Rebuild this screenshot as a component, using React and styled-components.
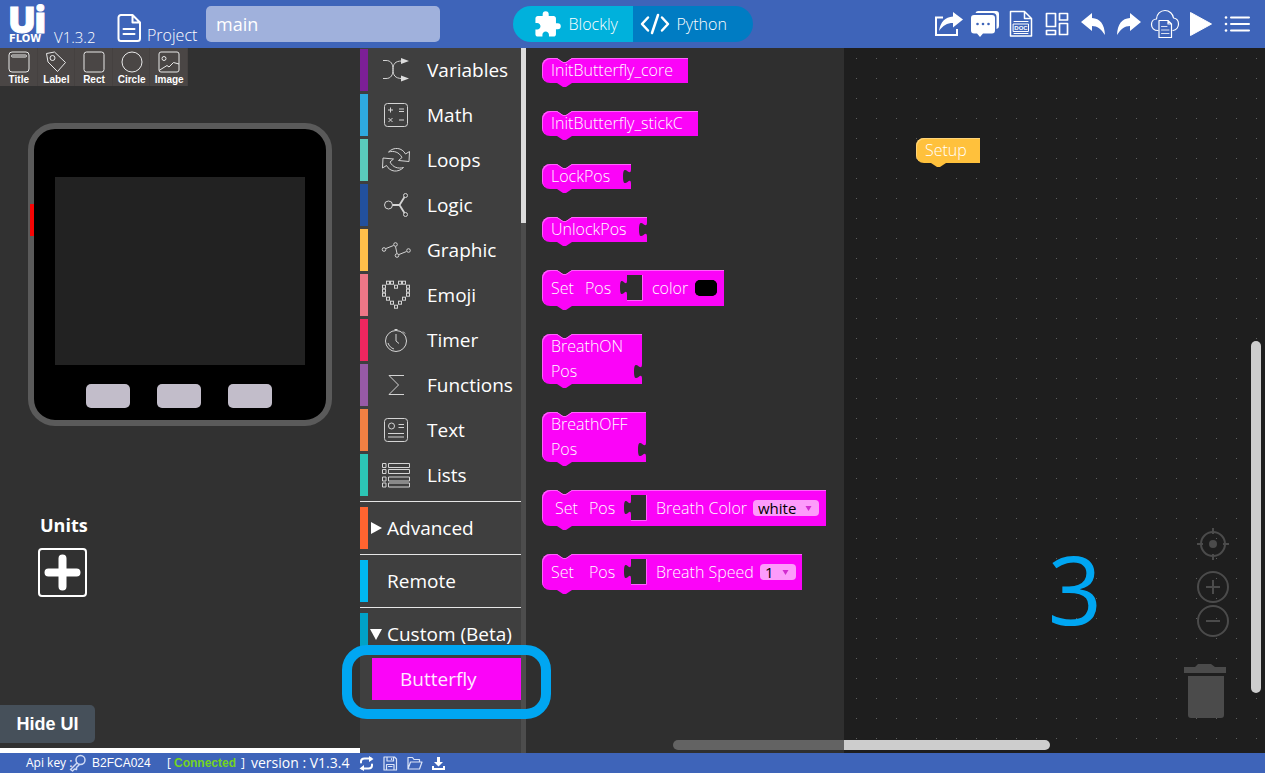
import React from 'react';
import styled, { createGlobalStyle } from 'styled-components';
import { MdExtension } from 'react-icons/md';

const c = {
  blue: '#3e64b9',
  left: '#313131',
  menu: '#3f3f3f',
  flyout: '#2f2f2f',
  canvas: '#1e1e1e',
  dot: '#5e5e5e',
  pink: '#fb04f8',
  pinkLight: '#ff62fc',
  ring: '#00a6f2',
  control: '#4b4b4b',
  thumb: '#cdcdcd',
};

const sans = '"Liberation Sans", Arial, sans-serif';
const ui = '"Open Sans", "Noto Sans", sans-serif';

const GlobalStyle = createGlobalStyle`
  *, *::before, *::after { box-sizing: border-box; }
  body { margin: 0; background: ${c.left}; color: #fff; font-family: ${ui}; }
  button { border: 0; padding: 0; margin: 0; background: none; color: inherit; font: inherit; cursor: pointer; }
  svg { display: block; flex: none; }
`;

const Page = styled.div`
  display: grid;
  grid-template-rows: 48px 1fr 20px;
  min-height: 100vh;
`;

/* ---------- header ---------- */
const Header = styled.header`
  display: grid;
  grid-template-columns: 1fr auto 1fr;
  align-items: center;
  background: ${c.blue};
`;
const HeaderLeft = styled.div`
  display: flex;
  align-items: flex-end;
  height: 36px;
  padding-left: 9px;
`;
const Logo = styled.svg`
  width: 36px;
  height: 36px;
  margin-right: 9px;
  overflow: visible;
  fill: #fff;
`;
const Version = styled.span`
  width: 63px;
  font: 300 15px/10px ${ui};
`;
const ProjectLabel = styled.label`
  display: flex;
  align-items: flex-end;
  gap: 6px;
  width: 89px;
  font: 300 16px/14px ${ui};
`;
const ProjectInput = styled.input`
  width: 234px;
  height: 36px;
  border: 0;
  border-radius: 5px;
  padding: 0 10px;
  background: #a0b1dc;
  color: #fff;
  font: 400 18px/28px ${ui};
  outline: 0;
`;
const ModeSwitch = styled.div`
  display: flex;
  height: 36px;
  border-radius: 18px;
  overflow: hidden;
`;
const Mode = styled.button`
  display: flex;
  align-items: center;
  gap: 7px;
  width: 120px;
  padding-left: ${(p) => (p.$active ? 20 : 7)}px;
  background: ${(p) => (p.$active ? '#00b1dc' : '#007cc3')};
  font: 300 16px/20px ${ui};
`;
const Actions = styled.div`
  display: flex;
  justify-content: flex-end;
  padding-right: 10px;
`;
const Action = styled.button`
  width: 36px;
  height: 36px;
`;

/* ---------- main ---------- */
const Main = styled.main`
  display: grid;
  grid-template-columns: 360px 166px 318px 1fr;
`;
const Designer = styled.section`
  display: flex;
  flex-direction: column;
  background: ${c.left};
  border-bottom: 5px solid #fff;
`;
const Tools = styled.div`
  display: flex;
  width: 188px;
  height: 38px;
  background: #4a4645;
`;
const Tool = styled.button`
  flex: 1;
  display: flex;
  flex-direction: column;
  align-items: center;
  gap: 1px;
  padding: 3px 0 0 1px;
  border-right: 1px solid #454140;
  font: 700 10px/11px ${sans};
`;
const Device = styled.div`
  position: relative;
  width: 304px;
  height: 303px;
  margin: 37px 0 0 28px;
  padding: 48px 21px 0;
  border: 6px solid #5a5a5a;
  border-radius: 27px;
  background: #000;
`;
const PowerMark = styled.i`
  position: absolute;
  left: -4px;
  top: 75px;
  width: 4px;
  height: 32px;
  background: #f50505;
`;
const Screen = styled.div`
  height: 188px;
  background: #222;
`;
const Keys = styled.div`
  display: flex;
  gap: 27px;
  margin: 19px 0 0 31px;
`;
const Key = styled.button`
  width: 44px;
  height: 24px;
  border-radius: 5px;
  background: #c2bdca;
`;
const UnitsTitle = styled.h2`
  margin: 87px 0 0 40px;
  font: 700 18px/24px ${ui};
`;
const AddUnit = styled.button`
  width: 49px;
  height: 49px;
  margin: 11px 0 0 38px;
  border: 2px solid #fff;
  border-radius: 4px;
`;
const HideUi = styled.button`
  align-self: flex-start;
  width: 95px;
  height: 38px;
  margin: auto 0 5px;
  border-radius: 0 5px 5px 0;
  background: #46505a;
  font: 700 18px/24px ${sans};
`;

/* ---------- category menu ---------- */
const Menu = styled.nav`
  display: grid;
  grid-template-columns: 1fr 5px;
  background: ${c.menu};
`;
const Categories = styled.div`
  display: flex;
  flex-direction: column;
  padding-top: 1px;
`;
const Category = styled.button`
  position: relative;
  display: flex;
  align-items: center;
  height: 42px;
  margin-bottom: 3px;
  border-left: 8px solid ${(p) => p.$color};
  padding-left: ${(p) => p.$indent || 14}px;
  gap: ${(p) => p.$gap || 17}px;
  white-space: nowrap;
  text-align: left;
  font: 400 19px/28px ${ui};
`;
const Rule = styled.hr`
  width: 100%;
  height: 1px;
  margin: 2px 0 5px;
  border: 0;
  background: #e6e6e6;
`;
const SubCategory = styled.div`
  position: relative;
  margin-left: 12px;
`;
const SubButton = styled.button`
  display: block;
  width: 100%;
  height: 42px;
  padding-left: 28px;
  background: ${c.pink};
  color: #ffe9ff;
  text-align: left;
  font: 400 19px/28px ${ui};
`;
const Ring = styled.div`
  position: absolute;
  z-index: 3;
  inset: -13px -30px -19px;
  border: 10px solid ${c.ring};
  border-radius: 25px;
  pointer-events: none;
`;
const MenuTrack = styled.div`
  background: #4d4d4d;
`;
const MenuThumb = styled.div`
  height: 175px;
  background: #dcdcdc;
`;

/* ---------- flyout blocks ---------- */
const Flyout = styled.section`
  position: relative;
  display: flex;
  flex-direction: column;
  align-items: flex-start;
  gap: 28px;
  padding: 10px 16px;
  background: ${c.flyout};
`;
const BlockBox = styled.div`
  position: relative;
  display: flex;
  flex-direction: ${(p) => (p.$stack ? 'column' : 'row')};
  align-items: ${(p) => (p.$stack ? 'flex-start' : 'center')};
  width: ${(p) => p.$w}px;
  height: ${(p) => p.$h}px;
  padding-left: ${(p) => p.$pad || 9}px;
  border-radius: 8px 0 0 8px;
  background: ${(p) => p.$bg || c.pink};
  box-shadow: inset 1px 1px 0 ${(p) => p.$edge || c.pinkLight};
  font: 300 16px/25px ${ui};
  white-space: pre;
`;
const NotchSvg = styled.svg`
  position: absolute;
  left: 15px;
  top: 0;
`;
const TabSvg = styled.svg`
  position: absolute;
  left: 15px;
  top: 100%;
`;
const PlugSvg = styled.svg`
  position: absolute;
  right: 0;
  bottom: 5px;
`;
const Word = styled.span`
  min-width: ${(p) => p.$w || 0}px;
`;
const Socket = styled.svg`
  margin-right: 9px;
`;
const ColorField = styled.input`
  appearance: none;
  width: 22px;
  height: 16px;
  border: 0;
  border-radius: 5px;
  padding: 0;
  background: #000;
  &::-webkit-color-swatch-wrapper { padding: 0; }
  &::-webkit-color-swatch { border: 0; border-radius: 5px; }
`;
const SelectWrap = styled.label`
  position: relative;
  display: flex;
  align-items: center;
`;
const Select = styled.select`
  appearance: none;
  width: ${(p) => p.$w}px;
  height: 16px;
  border: 0;
  border-radius: 4px;
  padding: 0 5px;
  background: #fd9bfb;
  color: #000;
  font: 400 15px/16px ${ui};
`;
const SelectArrow = styled.svg`
  position: absolute;
  right: 7px;
  pointer-events: none;
`;

/* ---------- canvas ---------- */
const Workspace = styled.section`
  position: relative;
  background-color: ${c.canvas};
  background-image:
    linear-gradient(to right, ${c.canvas} 19px, transparent 19px),
    linear-gradient(to bottom, ${c.dot} 1px, ${c.canvas} 1px);
  background-size: 20px 20px;
  background-position: 13px 10px;
`;
const FlyoutCorner = styled.svg`
  position: absolute;
  left: 0;
  top: 0;
`;
const Placed = styled.div`
  position: absolute;
  left: 72px;
  top: 90px;
`;
const StepNumber = styled.div`
  position: absolute;
  right: 163px;
  bottom: 115px;
  color: ${c.ring};
  font: 400 95px/100px ${ui};
`;
const Controls = styled.div`
  position: absolute;
  right: 36px;
  bottom: 35px;
  display: flex;
  flex-direction: column;
  align-items: flex-end;
`;
const Control = styled.button`
  margin-bottom: ${(p) => p.$after}px;
`;
const VScroll = styled.div`
  position: absolute;
  right: 4px;
  top: 293px;
  bottom: 60px;
  width: 10px;
  border-radius: 5px;
  background: ${c.thumb};
`;
const HScroll = styled.div`
  position: absolute;
  left: 0;
  bottom: 3px;
  width: 206px;
  height: 10px;
  border-radius: 0 5px 5px 0;
  background: ${c.thumb};
`;
const HScrollShade = styled.div`
  position: absolute;
  right: 0;
  bottom: 3px;
  width: 171px;
  height: 10px;
  border-radius: 5px 0 0 5px;
  background: #636363;
`;

/* ---------- footer ---------- */
const Footer = styled.footer`
  display: flex;
  align-items: center;
  padding-left: 26px;
  background: ${c.blue};
  font: 400 12px/20px ${ui};
  white-space: nowrap;
`;
const FootText = styled.span`
  width: ${(p) => p.$w}px;
  font-family: ${(p) => p.$font || ui};
  font-size: ${(p) => p.$size || 12}px;
  font-weight: ${(p) => p.$weight || 400};
`;
const Connected = styled.strong`
  width: 67px;
  color: #74d31f;
  font: 700 12px/20px ${sans};
`;
const FootButton = styled.button`
  width: 24px;
`;

/* ---------- drawings ---------- */
const line = { fill: 'none', stroke: '#fff', strokeWidth: 1.5, strokeLinejoin: 'round', strokeLinecap: 'round' };

const actions = [
  ['Share', <>
    <path {...line} strokeWidth="2" strokeLinecap="butt" strokeLinejoin="miter" d="M12 11.500H5V29H26V23" />
    <path fill="#fff" d="M32 13.500 22 6v4.500C14 11 9.500 16 8 25 12 19.500 16 17 22 17v4.500z" />
  </>],
  ['Messages', <>
    <path fill="#fff" d="M11 5H29a3 3 0 0 1 3 3V20a3 3 0 0 1-2.500 3V11a4 4 0 0 0-4-4H8.500A3 3 0 0 1 11 5z" />
    <path fill="#fff" d="M7 9H25a3 3 0 0 1 3 3V24.500a3 3 0 0 1-3 3H16L13 31 10 27.500H7a3 3 0 0 1-3-3V12a3 3 0 0 1 3-3z" />
    <g fill={c.blue}><circle cx="10.500" cy="18" r="1.300" /><circle cx="16" cy="18" r="1.300" /><circle cx="21.500" cy="18" r="1.300" /></g>
  </>],
  ['Documents', <>
    <path {...line} d="M7.500 5.500H21.500L28.500 12.500V30H7.500zM21.500 5.500V12.500H28.500" />
    <path {...line} strokeWidth="1" d="M11 15.500H25M11 27.500H25M10.500 18H25.500V25.500H10.500z" />
    <text x="18" y="24.200" textAnchor="middle" fill="#fff" fontSize="6" fontWeight="700" fontFamily="Liberation Sans">DOC</text>
  </>],
  ['Layout', <path {...line} strokeWidth="1.700" d="M7.500 7.500H16.500V20.500H7.500zM7.500 24.500H16.500V28.500H7.500zM20.500 7.500H28.500V14H20.500zM20.500 17.500H28.500V28.500H20.500z" />],
  ['Undo', <path fill="#fff" d="M6 16 17 7V12C25 12.500 29.500 18 30 29 26 23 22.500 20 17 20V25z" />],
  ['Redo', <path fill="#fff" d="M30 16 19 7V12C11 12.500 6.500 18 6 29 10 23 13.500 20 19 20V25z" />],
  ['Cloud files', <>
    <path {...line} strokeWidth="1.200" d="M11 24.500C7 24.500 4.500 22 4.500 18.500S7 13 9.500 13C9.500 8 13.500 4.500 18 4.500S26 8 26.500 12C30 12.500 31.500 15 31.500 18S29.500 24 26 24.500" />
    <path {...line} strokeWidth="1.200" d="M12 14.500H21L24.500 18V31.500H12zM21 14.500V18H24.500" />
    <path {...line} strokeWidth="1" opacity=".8" d="M14.500 20.500H20M14.500 24H22M14.500 27.500H22" />
  </>],
  ['Run', <path fill="#fff" stroke="#fff" strokeLinejoin="round" d="M7.500 6.500 28.500 18 7.500 29.500z" />],
  ['More', <>
    <path {...line} strokeWidth="2" d="M12 11.500H30M12 18H30M12 24.500H30" />
    <g fill="#fff"><circle cx="7" cy="11.500" r="1.300" /><circle cx="7" cy="18" r="1.300" /><circle cx="7" cy="24.500" r="1.300" /></g>
  </>],
];

const heart = [[6, 1.7], [10, 1.7], [18, 1.7], [22, 1.7], [2, 5.7], [2, 9.7], [2, 13.7], [26, 5.7], [26, 9.7], [26, 13.7], [14, 5.7], [6, 17.7], [10, 21.7], [14, 25.7], [18, 21.7], [22, 17.7]];

const categories = [
  ['Variables', '#7c1f96', <>
    <path d="M1 4.500H4C9 4.500 11 8 11 13.500S13 22.500 20 22.500M1 22.500H4C9 22.500 11 19 11 13.500S13 5 20 5" />
    <path fill="#ddd" stroke="none" d="M19 2 27 5 19 8zM19 19.500 27 22.500 19 25.500z" />
  </>],
  ['Math', '#2ea9df', <>
    <rect x="2.500" y="2.500" width="23" height="23" rx="3" />
    <path d="M6 9H11M8.500 6.500V11.500M17 8H22M17 10.500H22M6.500 17 10.500 21M10.500 17 6.500 21M17 19H22" />
  </>],
  ['Loops', '#5acbbc', <>
    <path d="M6.500 6C12 .5 20 1.500 23.500 8L27.500 5.500 27 15.500 16.500 14.500 20 11.500C17 6 12 4.500 6.500 6z" />
    <path d="M21.500 21.500C16 27 8 26 4.500 19.500L.5 22 1 12 11.500 13 8 16C11 21.500 16 23 21.500 21.500z" />
  </>],
  ['Logic', '#22509d', <>
    <circle cx="6.500" cy="14" r="4" />
    <path strokeWidth="1.800" d="M10.500 14H17.500L22.500 6M17.500 14 22.500 22" />
    <circle cx="23.500" cy="4.500" r="2" /><circle cx="23.500" cy="23.500" r="2" />
  </>],
  ['Graphic', '#ffbf4a', <>
    <circle cx="2" cy="13.500" r="1.800" /><circle cx="13.500" cy="8.500" r="1.800" /><circle cx="15" cy="19.500" r="1.800" /><circle cx="26.500" cy="14.500" r="1.800" />
    <path d="M4 12.500 11.500 9.500M13.500 10.500 15 17.500M17 18.500 24.500 15.500" />
  </>],
  ['Emoji', '#ed7787', <>{heart.map(([x, y]) => <rect key={`${x}-${y}`} x={x - 1.5} y={y - 1.5} width="3" height="3" />)}</>],
  ['Timer', '#f0265f', <>
    <circle cx="14" cy="15" r="10.500" /><path d="M14 8V15L17 17.500M12.500 3.500H15.500M14 3V4.500M21 5.500 23 7.500M6 17C7 20 9 22 12 23" />
  </>],
  ['Functions', '#975aa6', <path d="M22 4.500H7L16.500 14 7 23.500H22" />],
  ['Text', '#f18043', <>
    <rect x="2.500" y="2.500" width="23" height="23" rx="3" /><circle cx="9.500" cy="10" r="3" />
    <path d="M16.500 8.500H22M16.500 11.500H22M6 17.500H22M6 21H22" />
  </>],
  ['Lists', '#2cc5b5', <path d="M.5 2.500H4V6.500H.5zM6.500 2.500H27.500V6.500H6.500zM.5 8.500H4V12.500H.5zM6.500 8.500H27.500V12.500H6.500zM.5 16H4V20H.5zM6.500 16H27.500V20H6.500zM.5 22H4V26H.5zM6.500 22H27.500V26H6.500z" />],
];

const tools = [
  ['Title', <><rect x="1" y="1" width="20" height="20" rx="3" /><rect x="3.500" y="4" width="15" height="2" rx="1" /></>],
  ['Label', <><path d="M1.500 2.500 9.500 1 20.500 11.500 12.500 20.500 3 11z" /><circle cx="7.500" cy="7" r="2.500" /></>],
  ['Rect', <rect x="1" y="1" width="20" height="20" rx="2.500" />],
  ['Circle', <circle cx="11" cy="11" r="10" />],
  ['Image', <><rect x="1" y="1" width="20" height="20" rx="2" /><circle cx="6" cy="7.500" r="2" /><path d="M1 19.500 9 14.500 11 16 15.500 11.500 21 13" /></>],
];

function Block({ notch = true, plug, bg, children, ...rest }) {
  const fill = bg || c.pink;
  return (
    <BlockBox $bg={bg} {...rest}>
      {notch && (
        <NotchSvg width="15" height="5" aria-hidden="true">
          <path d="M0 0 6 4H9L15 0z" fill={c.flyout} />
          <path d="M0 .5 6 4.500H9L15 .5" fill="none" stroke={c.pinkLight} />
        </NotchSvg>
      )}
      {children}
      {plug && (
        <PlugSvg width="8" height="15" aria-hidden="true">
          <path d="M8 0C8 10 0 -8 0 7.500S8 5 8 15z" fill={c.flyout} />
        </PlugSvg>
      )}
      <TabSvg width="15" height="4" aria-hidden="true">
        <path d="M0 0 6 4H9L15 0z" fill={fill} />
      </TabSvg>
    </BlockBox>
  );
}

const ValueSocket = () => (
  <Socket width="23" height="26" aria-hidden="true">
    <path d="M7 0H22V26H7V20C7 10 0 28 0 12.500S7 15 7 5z" fill={c.flyout} />
    <path d="M7 25.500H22.500V0" fill="none" stroke={c.pinkLight} />
  </Socket>
);

function Dropdown({ name, value, width }) {
  return (
    <SelectWrap>
      <Select $w={width} aria-label={name} defaultValue={value}>
        <option>{value}</option>
      </Select>
      <SelectArrow width="7" height="5" aria-hidden="true"><path d="M.5 0H6.500L3.500 5z" fill="#d22bd0" /></SelectArrow>
    </SelectWrap>
  );
}

export default function App() {
  return (
    <Page>
      <GlobalStyle />
      <Header>
        <HeaderLeft>
          <Logo role="img" aria-label="UiFlow">
            <text x="0" y="27" fontFamily="Inter" fontWeight="900" fontSize="36" stroke="#fff" strokeWidth="1">Ui</text>
            <text x="0" y="36" fontFamily="DejaVu Sans" fontWeight="700" fontSize="10">FLOW</text>
          </Logo>
          <Version>V1.3.2</Version>
          <ProjectLabel htmlFor="project">
            <svg width="24" height="28" aria-hidden="true"><path {...line} strokeWidth="2" d="M4 1H15.500L23 8.500V24.500A2.500 2.500 0 0 1 20.500 27H4A2.500 2.500 0 0 1 1.500 24.500V3.500A2.500 2.500 0 0 1 4 1zM15.500 1.500V8.500H22.500M6.500 15H17.500M6.500 20H17.500" /></svg>
            Project
          </ProjectLabel>
          <ProjectInput id="project" defaultValue="main" />
        </HeaderLeft>
        <ModeSwitch>
          <Mode $active><MdExtension size={29} aria-hidden="true" />Blockly</Mode>
          <Mode>
            <svg width="30" height="24" aria-hidden="true"><path {...line} strokeWidth="2.500" d="M8 5.500 2 12 8 18.500M22 5.500 28 12 22 18.500M18 3 12 21" /></svg>
            Python
          </Mode>
        </ModeSwitch>
        <Actions>
          {actions.map(([name, art]) => (
            <Action key={name} aria-label={name}><svg width="36" height="36">{art}</svg></Action>
          ))}
        </Actions>
      </Header>

      <Main>
        <Designer>
          <Tools>
            {tools.map(([name, art]) => (
              <Tool key={name}>
                <svg width="22" height="22" fill="none" stroke="#e8e8e8" strokeWidth="1" strokeLinejoin="round">{art}</svg>
                {name}
              </Tool>
            ))}
          </Tools>
          <Device>
            <PowerMark />
            <Screen />
            <Keys><Key aria-label="Button A" /><Key aria-label="Button B" /><Key aria-label="Button C" /></Keys>
          </Device>
          <UnitsTitle>Units</UnitsTitle>
          <AddUnit aria-label="Add unit">
            <svg width="45" height="45" stroke="#fff" strokeWidth="8" strokeLinecap="round"><path d="M8.500 22.500H36.500M22.500 8.500V36.500" /></svg>
          </AddUnit>
          <HideUi>Hide UI</HideUi>
        </Designer>

        <Menu>
          <Categories>
            {categories.map(([name, color, art]) => (
              <Category key={name} $color={color}>
                <svg width="28" height="28" overflow="visible" fill="none" stroke="#d4d4d4" strokeWidth="1">{art}</svg>
                {name}
              </Category>
            ))}
            <Rule />
            <Category $color="#ff6430" $indent={3} $gap={5}>
              <svg width="11" height="12"><path d="M0 0 11 6 0 12z" fill="#fff" /></svg>Advanced
            </Category>
            <Rule />
            <Category $color="#00b8f1" $indent={19}>Remote</Category>
            <Rule />
            <Category $color="#00a2c7" $indent={2} $gap={5}>
              <svg width="12" height="11"><path d="M0 0H12L6 11z" fill="#fff" /></svg>Custom (Beta)
            </Category>
            <SubCategory>
              <SubButton>Butterfly</SubButton>
              <Ring />
            </SubCategory>
          </Categories>
          <MenuTrack><MenuThumb /></MenuTrack>
        </Menu>

        <Flyout>
          <Block $w={146} $h={25}>InitButterfly_core</Block>
          <Block $w={156} $h={25}>InitButterfly_stickC</Block>
          <Block $w={89} $h={25} plug>LockPos</Block>
          <Block $w={105} $h={25} plug>UnlockPos</Block>
          <Block $w={182} $h={36}>
            <Word $w={34}>Set</Word><Word $w={35}>Pos</Word><ValueSocket />
            <Word $w={43}>color</Word>
            <ColorField type="color" aria-label="color" defaultValue="#000000" />
          </Block>
          <Block $w={100} $h={50} $stack plug><Word>BreathON</Word><Word>Pos</Word></Block>
          <Block $w={104} $h={50} $stack plug><Word>BreathOFF</Word><Word>Pos</Word></Block>
          <Block $w={284} $h={36} $pad={13}>
            <Word $w={34}>Set</Word><Word $w={35}>Pos</Word><ValueSocket />
            <Word $w={97}>Breath Color</Word>
            <Dropdown name="Breath Color" value="white" width={66} />
          </Block>
          <Block $w={260} $h={36}>
            <Word $w={38}>Set</Word><Word $w={35}>Pos</Word><ValueSocket />
            <Word $w={104}>Breath Speed</Word>
            <Dropdown name="Breath Speed" value="1" width={36} />
          </Block>
          <HScrollShade />
        </Flyout>

        <Workspace>
          <Placed>
            <Block $w={64} $h={25} bg="#ffc13c" $edge="#ffd47a" notch={false}>Setup</Block>
          </Placed>
          <StepNumber>3</StepNumber>
          <Controls>
            <Control aria-label="Center" $after={11}>
              <svg width="32" height="32" fill="none" stroke={c.control} strokeWidth="2"><circle cx="16" cy="16" r="12" /><circle cx="16" cy="16" r="4" fill={c.control} stroke="none" /><path d="M16 0V6M16 26V32M0 16H6M26 16H32" /></svg>
            </Control>
            <Control aria-label="Zoom in" $after={2}>
              <svg width="32" height="32" fill="none" stroke={c.control} strokeWidth="2"><circle cx="16" cy="16" r="15" /><path d="M9 16H23M16 9V23" /></svg>
            </Control>
            <Control aria-label="Zoom out" $after={27}>
              <svg width="32" height="32" fill="none" stroke={c.control} strokeWidth="2"><circle cx="16" cy="16" r="15" /><path d="M9 16H23" /></svg>
            </Control>
            <Control aria-label="Delete" $after={0}>
              <svg width="45" height="54" fill={c.control}><path d="M0 3H11L14 0H27L31 3H42V9H0zM4 12H40V51A3 3 0 0 1 37 54H7A3 3 0 0 1 4 51z" /></svg>
            </Control>
          </Controls>
          <VScroll />
          <HScroll />
        </Workspace>
      </Main>

      <Footer>
        <FootText $w={43}>Api key :</FootText>
        <svg width="23" height="18" {...line} stroke="#cfdaf5"><circle cx="11.500" cy="6" r="4.500" /><path d="M8 9 1.500 15.500 3.500 17 5.500 15 7.500 15.500 7.500 13.500 10 11" /></svg>
        <FootText $w={75} $font={sans}>B2FCA024</FootText>
        <FootText $w={7}>[</FootText>
        <Connected>Connected</Connected>
        <FootText $w={10}>]</FootText>
        <FootText $w={108} $size={14}>version : V1.3.4</FootText>
        <FootButton aria-label="Refresh">
          <svg width="15" height="15" {...line} strokeWidth="2"><path d="M2 6.500V5.500C2 3.500 3.500 2.500 5.500 2.500H12M13 8.500V9.500C13 11.500 11.500 12.500 9.500 12.500H3" /><path fill="#fff" stroke="none" d="M10 0 14.500 3 10 6zM5 9 .5 12.500 5 15z" /></svg>
        </FootButton>
        <FootButton aria-label="Save">
          <svg width="15" height="15" {...line} strokeWidth="1.200" stroke="#dbe4f8"><path d="M1 1H11.500L13.500 3V14H1zM4 1V5H10.500V1M3.500 14V8.500H11V14M5.500 10.500H9M8.500 2.500V3.500" /></svg>
        </FootButton>
        <FootButton aria-label="Open">
          <svg width="16" height="15" {...line} strokeWidth="1.200" stroke="#dbe4f8"><path d="M1 13V1.500H5.500L7 3.500H12.500V6M1 13 3.500 6H15L12.500 13z" /></svg>
        </FootButton>
        <FootButton aria-label="Download">
          <svg width="15" height="15"><path fill="#fff" d="M6 1H9V6H12L7.500 10.500 3 6H6zM1 10H3V12H12V10H14V14H1z" /></svg>
        </FootButton>
      </Footer>
    </Page>
  );
}
